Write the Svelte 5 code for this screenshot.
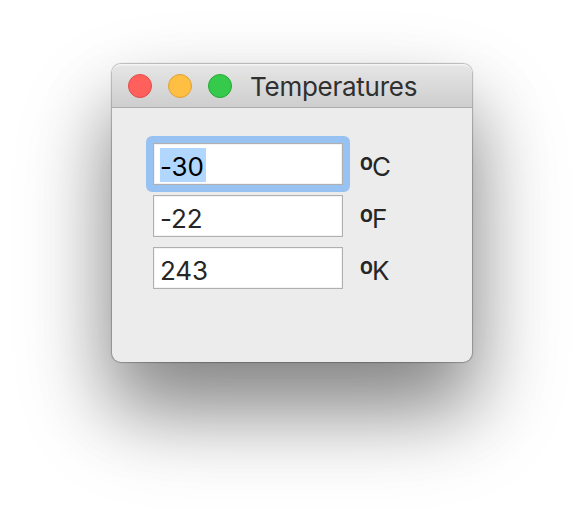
<script>
  const rows = [
    { value: '-30', unit: 'C', focused: true },
    { value: '-22', unit: 'F', focused: false },
    { value: '243', unit: 'K', focused: false }
  ];
</script>

<main class="desktop">
  <section class="window">
    <header class="titlebar">
      <span class="light close"></span>
      <span class="light minimize"></span>
      <span class="light zoom"></span>
      <h1>Temperatures</h1>
    </header>
    <div class="content">
      {#each rows as row}
        <div class="row">
          <div class="field" class:focused={row.focused}>
            <span class="value">{row.value}</span>
          </div>
          <span class="unit"><span class="degree">º</span>{row.unit}</span>
        </div>
      {/each}
    </div>
  </section>
</main>

<style>
  :global(body) {
    margin: 0;
    background: #fff;
  }
  .desktop {
    box-sizing: border-box;
    width: 584px;
    height: 522px;
    padding: 64px 112px 0;
    overflow: hidden;
    font-family: Inter, 'Liberation Sans', sans-serif;
    color: #262626;
  }
  .window {
    width: 360px;
    height: 298px;
    border-radius: 9px;
    background: #ececec;
    box-shadow:
      0 0 1px 1px rgba(0, 0, 0, 0.25),
      0 48px 100px rgba(0, 0, 0, 0.24),
      0 44px 72px rgba(0, 0, 0, 0.33);
  }
  .titlebar {
    box-sizing: border-box;
    display: flex;
    align-items: center;
    gap: 16px;
    height: 44px;
    padding-left: 16px;
    border-bottom: 1px solid #adadad;
    border-radius: 9px 9px 0 0;
    background: linear-gradient(#e6e6e6, #cecece);
    box-shadow: inset 0 2px 0 -0.5px #f4f4f4;
  }
  .light {
    box-sizing: border-box;
    width: 24px;
    height: 24px;
    border: 1px solid;
    border-radius: 50%;
    margin-top: 1px;
  }
  .close {
    background: #ff605c;
    border-color: #e24b48;
  }
  .minimize {
    background: #ffbf42;
    border-color: #e0a034;
  }
  .zoom {
    background: #35ca4b;
    border-color: #26a934;
  }
  h1 {
    margin: 3px 0 0 2px;
    font-size: 26px;
    font-weight: 400;
    line-height: 32px;
    letter-spacing: -0.26px;
    color: #303030;
  }
  .content {
    display: flex;
    flex-direction: column;
    gap: 10px;
    padding: 35px 0 0 41px;
  }
  .row {
    display: flex;
    height: 42px;
    font-size: 26px;
  }
  .field {
    box-sizing: border-box;
    width: 190px;
    padding: 4px 6px;
    border: 1px solid #b0b0b0;
    background: #fff;
    box-shadow: inset 0 0 0 1px #f3f3f3;
  }
  .value {
    display: block;
    width: 46px;
    height: 34px;
    line-height: 38px;
    letter-spacing: -0.1px;
    white-space: nowrap;
  }
  .focused {
    position: relative;
  }
  .focused::after {
    content: '';
    position: absolute;
    inset: -8px;
    border: 7px solid #97c2f2;
    border-radius: 6px;
  }
  .focused .value {
    background: #b2d7fe;
    color: #000;
  }
  .unit {
    display: flex;
    margin-left: 16px;
    padding-top: 5px;
    line-height: 38px;
  }
  .degree {
    width: 13px;
    font-size: 33px;
    letter-spacing: -1px;
    line-height: 43px;
  }
</style>
